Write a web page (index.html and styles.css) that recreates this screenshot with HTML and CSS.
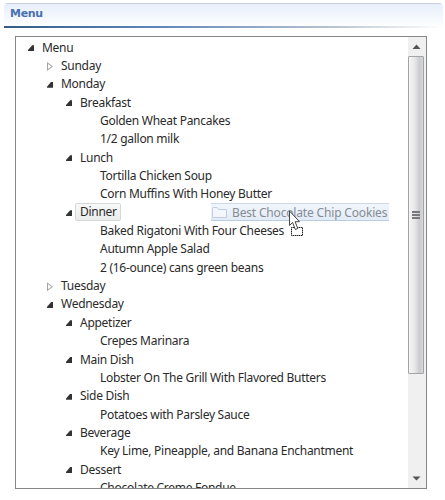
FILE: index.html
```
<!DOCTYPE html>
<html lang="en">
  <head>
    <title>Menu</title>
    <meta charset="utf-8">
    <link rel="stylesheet" href="styles.css">
  </head>
  <body>
    <h1 class="header">Menu</h1>
    <div class="panel">
      <div class="tree">
        <div class="row open">Menu</div>
        <div class="row day closed">Sunday</div>
        <div class="row day open">Monday</div>
        <div class="row meal open">Breakfast</div>
        <div class="row dish">Golden Wheat Pancakes</div>
        <div class="row dish">1/2 gallon milk</div>
        <div class="row meal open">Lunch</div>
        <div class="row dish">Tortilla Chicken Soup</div>
        <div class="row dish">Corn Muffins With Honey Butter</div>
        <div class="row meal open"><span class="selected">Dinner</span></div>
        <div class="row dish">Baked Rigatoni With Four Cheeses</div>
        <div class="row dish">Autumn Apple Salad</div>
        <div class="row dish">2 (16-ounce) cans green beans</div>
        <div class="row day closed">Tuesday</div>
        <div class="row day open">Wednesday</div>
        <div class="row meal open">Appetizer</div>
        <div class="row dish">Crepes Marinara</div>
        <div class="row meal open">Main Dish</div>
        <div class="row dish">Lobster On The Grill With Flavored Butters</div>
        <div class="row meal open">Side Dish</div>
        <div class="row dish">Potatoes with Parsley Sauce</div>
        <div class="row meal open">Beverage</div>
        <div class="row dish">Key Lime, Pineapple, and Banana Enchantment</div>
        <div class="row meal open">Dessert</div>
        <div class="row dish">Chocolate Creme Fondue</div>
      </div>
      <div class="scrollbar">
        <svg class="arrow" width="17" height="19"><path d="M4.5 12 L8.5 7.5 L12.5 12 Z" fill="#555"/></svg>
        <div class="thumb"><i></i><i></i><i></i></div>
        <svg class="arrow" width="17" height="19"><path d="M4.5 7.5 L12.5 7.5 L8.5 11.5 Z" fill="#555"/></svg>
      </div>
    </div>
    <!-- item being dragged -->
    <div class="drag">
      <svg width="17" height="13"><path d="M1.5 11.5 V2.5 Q1.5 1.5 2.5 1.5 H6 L7.5 3.5 H15.5 V11.5 Z" fill="#f3f7fc" stroke="#c3cee0"/></svg>
      <span>Best Chocolate Chip Cookies</span>
    </div>
    <svg class="cursor" width="17" height="28">
      <rect x="3.5" y="17.5" width="11" height="8" fill="#fff" stroke="#999"/>
      <rect x="3.5" y="17.5" width="11" height="8" fill="none" stroke="#222" stroke-dasharray="1 1" stroke-dashoffset="0.5"/>
      <path d="M1.5 1 V15.5 L4.6 12.5 L7.3 19.5 L9.8 18.5 L7.1 11.7 H11.5 Z" fill="#fff" stroke="#444"/>
    </svg>
  </body>
</html>
```

FILE: styles.css
```
body {
  background-color: #ffffff;
  color: #2a2a2a;
  font-family: "Noto Sans", "Open Sans", sans-serif;
  font-size: 12px;
  margin: 0px;
  padding: 3px 2px 0px 4px;
  overflow: hidden;
}
.header {
  box-sizing: border-box;
  height: 25px;
  margin: 0px;
  padding-left: 6px;
  border-radius: 4px 4px 0px 0px;
  background:
    linear-gradient(to right, #355c86, #5f86bb 35%, #b9c3d0 75%, #ffffff) bottom / 100% 2px no-repeat,
    linear-gradient(#c9d0dc, #c9d0dc) top / 100% 1px no-repeat,
    linear-gradient(#e6eefb, #ffffff);
  color: #4a70b0;
  font: bold 11px/21px "DejaVu Sans", sans-serif;
  letter-spacing: -0.3px;
}
.panel {
  display: flex;
  box-sizing: border-box;
  width: 412px;
  height: 453px;
  margin: 8px 0px 0px 11px;
  border: 1px solid #85878b;
}
.tree {
  flex: 1;
  overflow: hidden;
  padding-top: 1px;
}
.row {
  display: flex;
  align-items: center;
  height: 18.35px;
  padding-left: 10px;
  letter-spacing: -0.28px;
  white-space: nowrap;
}
.day {
  padding-left: 29px;
}
.meal {
  padding-left: 48px;
}
.dish {
  padding-left: 84px;
}
.open::before, .closed::before {
  content: "";
  width: 6px;
  height: 6px;
  margin: 2px 8px 0px 2px;
  background-color: #333333;
  clip-path: polygon(70% 0, 100% 0, 100% 100%, 0 100%, 0 80%);
}
.closed::before {
  width: 6px;
  height: 9px;
  background-color: #a5a5a5;
  clip-path: polygon(evenodd, 0 0, 100% 50%, 0 100%, 0 0, 1px 2px, 1px 7px, 4.5px 4.5px, 1px 2px);
}
.selected {
  margin-left: -5px;
  padding: 0px 3px 0px 4px;
  border: 1px solid #d4d8d8;
  border-radius: 2px;
  background: linear-gradient(#f8f9f9, #eaecec);
  line-height: 16px;
}
.scrollbar {
  display: flex;
  flex-direction: column;
  width: 18px;
  background-color: #f0f0f0;
}
.arrow {
  flex: none;
}
.thumb {
  display: flex;
  flex-direction: column;
  align-items: center;
  justify-content: center;
  gap: 1px;
  box-sizing: border-box;
  height: 318px;
  margin: 0px 2px auto 0px;
  border: 1px solid #a2a4a7;
  border-radius: 1px;
  background: linear-gradient(to right, #f5f5f5, #e8e8e9 40%, #cbccce 75%, #d8d8da);
}
.thumb i {
  width: 8px;
  height: 2px;
  background-color: #77797c;
}
.drag {
  position: absolute;
  left: 211px;
  top: 203px;
  display: flex;
  align-items: center;
  gap: 4px;
  box-sizing: border-box;
  width: 178px;
  height: 18px;
  border-top: 1px solid #cbd8e6;
  border-bottom: 1px solid #b9cde3;
  background: linear-gradient(#f1f6fc, #e2ebf6);
  color: #868c94;
  letter-spacing: -0.17px;
  white-space: nowrap;
}
.cursor {
  position: absolute;
  left: 288px;
  top: 210px;
}
```
